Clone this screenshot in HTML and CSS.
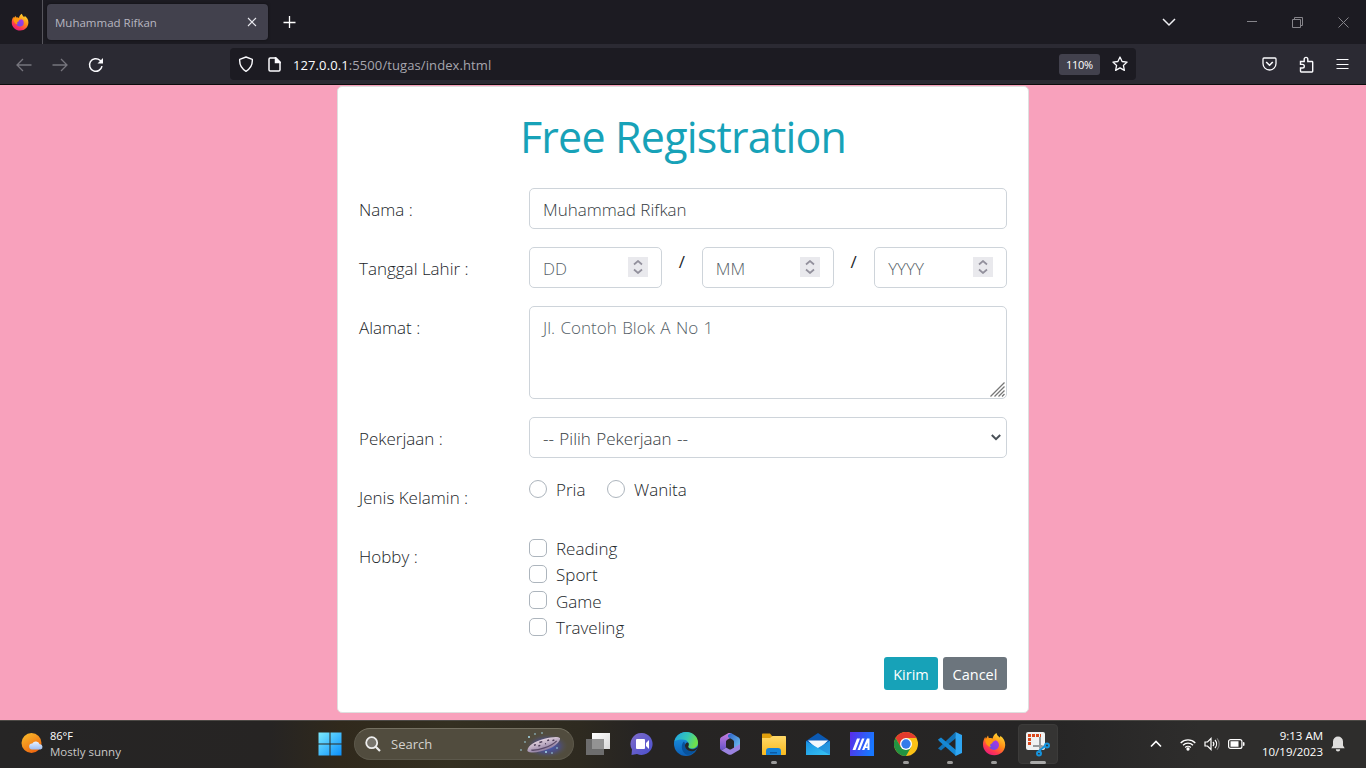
FILE: index.html
```html
<!DOCTYPE html>
<html lang="id">
<head>
<meta charset="utf-8">
<title>Muhammad Rifkan</title>
<link rel="stylesheet" href="styles.css">
</head>
<body>
<svg class="defs" width="0" height="0">
  <defs>
    <linearGradient id="fxA" x1=".8" y1="0" x2=".2" y2="1"><stop offset="0" stop-color="#ffe236"/><stop offset=".45" stop-color="#ff8a16"/><stop offset=".75" stop-color="#ff3750"/><stop offset="1" stop-color="#e31587"/></linearGradient>
    <linearGradient id="fxB" x1="1" y1="0" x2="0" y2="1"><stop offset="0" stop-color="#b833e1"/><stop offset="1" stop-color="#5a4ee8"/></linearGradient>
    <symbol id="firefox" viewBox="0 0 24 24">
      <path fill="url(#fxA)" d="M14.500 1c.4 2.300 2 3.200 3.100 4.600.6-.3.700-1.100.6-1.900C21.500 6 23.300 9 23.200 13 23 19 18.300 23.300 12.300 23.300 6 23.300 1 18.500 1 12.500c0-3 .8-5.500 2.300-7.500l.6 1.800L6 3.500l.8 2.800c1.500-.4 2.700-.2 3.800.3C11.200 4 12.300 2.300 14.500 1z"/>
      <circle cx="12" cy="13" r="5" fill="url(#fxB)"/>
      <path fill="#ff980e" d="M3.300 7.200C5.500 5.600 9 6 10.600 7.200l3.200.6c-.4 1.200-2.400 1.500-2.900 2-.4.500-.3 1.500-1.600 1.900-1.600.4-1.300 2.300-.3 3.200-3 .2-6-3.400-5.700-7.700z"/>
    </symbol>
    <linearGradient id="win" x2="1" y2="1"><stop stop-color="#7ceafe"/><stop offset="1" stop-color="#0a8ffb"/></linearGradient>
    <linearGradient id="sun" x2=".6" y2="1"><stop stop-color="#f9bf2c"/><stop offset="1" stop-color="#ee6710"/></linearGradient>
    <linearGradient id="cloud" x2="0" y2="1"><stop stop-color="#eaf3ff"/><stop offset="1" stop-color="#9dbdf0"/></linearGradient>
    <linearGradient id="tv" x2="1" y2="1"><stop stop-color="#fff"/><stop offset="1" stop-color="#d8d8d8"/></linearGradient>
    <linearGradient id="chat" x2="1" y2="1"><stop stop-color="#7e6bc9"/><stop offset="1" stop-color="#4a50cf"/></linearGradient>
    <linearGradient id="edA" x2="1" y2=".3"><stop stop-color="#1fa2e6"/><stop offset=".6" stop-color="#35c7b4"/><stop offset="1" stop-color="#6ee04c"/></linearGradient>
    <linearGradient id="edB" x2="0" y2="1"><stop stop-color="#1c9be8"/><stop offset="1" stop-color="#0c5fb6"/></linearGradient>
    <linearGradient id="ofA" x2="0" y2="1"><stop stop-color="#c77de0"/><stop offset="1" stop-color="#6552c8"/></linearGradient>
    <linearGradient id="ofB" x2="1" y2="1"><stop stop-color="#2b5fc4"/><stop offset="1" stop-color="#74c9f5"/></linearGradient>
    <linearGradient id="fold" x2="0" y2="1"><stop stop-color="#ffd969"/><stop offset="1" stop-color="#f8b91e"/></linearGradient>
    <linearGradient id="mail" x2="1" y2="1"><stop stop-color="#1790e2"/><stop offset="1" stop-color="#39c5f4"/></linearGradient>
    <linearGradient id="asus" x1="0" y1="0" x2="1" y2=".3"><stop stop-color="#5a2be8"/><stop offset="1" stop-color="#1877ff"/></linearGradient>
    <radialGradient id="glow"><stop stop-color="#3e62d8"/><stop offset=".6" stop-color="#4b4fa0" stop-opacity=".6"/><stop offset="1" stop-color="#555" stop-opacity="0"/></radialGradient>
    <linearGradient id="ship" x2="0" y2="1"><stop stop-color="#e0d0dc"/><stop offset="1" stop-color="#8d7ba0"/></linearGradient>
  </defs>
</svg>

<header class="tabbar">
  <div class="pinned"><svg width="18" height="18"><use href="#firefox"/></svg></div>
  <div class="tab">
    <span class="tab-title">Muhammad Rifkan</span>
    <svg width="10" height="10" viewBox="0 0 10 10" stroke="#e8e8ee" stroke-width="1.100"><path d="M1 1l8 8M9 1l-8 8"/></svg>
  </div>
  <svg class="new-tab" width="14" height="14" viewBox="0 0 14 14" stroke="#fff" stroke-width="1.300"><path d="M6.500 1v12M.5 7.500h12"/></svg>
  <div class="window-controls">
    <svg width="14" height="10" viewBox="0 0 14 10" fill="none" stroke="#f0f0f4" stroke-width="1.500"><path d="M1 2l6 6 6-6"/></svg>
    <svg class="minimize" width="10" height="10" viewBox="0 0 10 10" stroke="#85848a"><path d="M0 4.500h10"/></svg>
    <svg width="11" height="11" viewBox="0 0 11 11" fill="none" stroke="#85848a"><path d="M.5 2.500h8v8h-8zM2.500 2.500v-2h8v8h-2"/></svg>
    <svg width="11" height="11" viewBox="0 0 11 11" stroke="#85848a"><path d="M.5.5l10 10M10.500.5l-10 10"/></svg>
  </div>
</header>

<nav class="toolbar">
  <div class="nav-buttons">
    <svg width="16" height="14" viewBox="0 0 16 14" fill="none" stroke="#76757d" stroke-width="1.300"><path d="M15.500 7H1M7 1L1 7l6 6"/></svg>
    <svg width="16" height="14" viewBox="0 0 16 14" fill="none" stroke="#76757d" stroke-width="1.300"><path d="M.5 7H15M9 1l6 6-6 6"/></svg>
    <svg width="16" height="16" viewBox="0 0 16 16" fill="none" stroke="#fbfbfe" stroke-width="1.500"><path d="M14 9.200a6.300 6.300 0 1 1-2-5.900l1.500 1.500"/><path d="M15 1v5.500H9.500z" fill="#fbfbfe" stroke="none"/></svg>
  </div>
  <div class="urlbar">
    <svg width="16" height="16" viewBox="0 0 16 16" fill="none" stroke="#fbfbfe" stroke-width="1.400"><path d="M8 1l6.300 2.300c.4 5-1.600 9.200-6.300 12C3.300 12.500 1.300 8.300 1.700 3.300z" stroke-linejoin="round"/></svg>
    <svg class="page-icon" width="13" height="15" viewBox="0 0 13 15" fill="none" stroke="#fbfbfe" stroke-width="1.500"><path d="M8 1H2.200C1.500 1 1 1.500 1 2.200v10.500c0 .7.500 1.200 1.200 1.200h8.600c.7 0 1.200-.5 1.200-1.200V5z"/><path d="M7.500 1v4.500H12z" fill="#fbfbfe"/></svg>
    <span class="url"><b>127.0.0.1</b>:5500/tugas/index.html</span>
    <span class="zoom">110%</span>
    <svg width="16" height="16" viewBox="0 0 16 16" fill="none" stroke="#fbfbfe" stroke-width="1.300" stroke-linejoin="round"><path d="M8 1l2.100 4.500 5 .6-3.700 3.300 1 5L8 11.900l-4.400 2.500 1-5L.9 6.100l5-.6z"/></svg>
  </div>
  <div class="tool-buttons">
    <svg width="15" height="14" viewBox="0 0 15 14" fill="none" stroke="#fbfbfe" stroke-width="1.300"><path d="M2 1h11c.6 0 1 .4 1 1v4.500a6.500 6.500 0 0 1-13 0V2c0-.6.400-1 1-1z"/><path d="M4.200 5l3.300 3.200L10.800 5" stroke-width="1.600"/></svg>
    <svg width="15" height="17" viewBox="0 0 15 17" fill="none" stroke="#fbfbfe" stroke-width="1.400"><path d="M1.500 5.500H5.200V3.200a1.800 1.800 0 0 1 3.600 0V5.500H13c.4 0 .7.300.7.700v9.100c0 .4-.3.700-.7.700H2.200c-.4 0-.7-.3-.7-.7V12h2a1.800 1.800 0 0 0 0-3.600h-2z"/></svg>
    <svg width="13" height="11" viewBox="0 0 13 11" stroke="#fbfbfe" stroke-width="1.200"><path d="M.5.5h12M.5 5.500h12M.5 9.500h12"/></svg>
  </div>
</nav>

<main class="page">
  <form class="card">
    <h1 class="title"><span>Free Registration</span></h1>
    <div class="row"><label class="label">Nama :</label><div class="control">Muhammad Rifkan</div></div>
    <div class="row">
      <label class="label">Tanggal Lahir :</label>
      <div class="dates">
        <div class="control number">DD<i class="spin"><svg width="10" height="14" viewBox="0 0 10 14" fill="none" stroke="#92909c" stroke-width="1.700"><path d="M1 4.500l4-3.500 4 3.500M1 9.500L5 13l4-3.500"/></svg></i></div>
        <span class="slash">/</span>
        <div class="control number month">MM<i class="spin"><svg width="10" height="14" viewBox="0 0 10 14" fill="none" stroke="#92909c" stroke-width="1.700"><path d="M1 4.500l4-3.500 4 3.500M1 9.500L5 13l4-3.500"/></svg></i></div>
        <span class="slash">/</span>
        <div class="control number year">YYYY<i class="spin"><svg width="10" height="14" viewBox="0 0 10 14" fill="none" stroke="#92909c" stroke-width="1.700"><path d="M1 4.500l4-3.500 4 3.500M1 9.500L5 13l4-3.500"/></svg></i></div>
      </div>
    </div>
    <div class="row"><label class="label">Alamat :</label><div class="control area">Jl. Contoh Blok A No 1<svg class="grip" width="15" height="15" viewBox="0 0 15 15" stroke="#777" stroke-width="1.300"><path d="M.5 14.500l14-14M4.500 14.500l10-10M8.500 14.500l6-6M12 14.500l2.500-2.500"/></svg></div></div>
    <div class="row"><label class="label">Pekerjaan :</label><div class="control select"><span class="pick">-- Pilih Pekerjaan --</span><svg width="10" height="7" viewBox="0 0 10 7" fill="none" stroke="#495057" stroke-width="2"><path d="M.8 1L5 5.200 9.200 1"/></svg></div></div>
    <div class="row">
      <label class="label">Jenis Kelamin :</label>
      <div class="radios"><span class="option first"><i class="box round"></i>Pria</span><span class="option"><i class="box round"></i>Wanita</span></div>
    </div>
    <div class="row">
      <label class="label">Hobby :</label>
      <div class="checks"><span class="option"><i class="box"></i>Reading</span><span class="option"><i class="box"></i>Sport</span><span class="option"><i class="box"></i>Game</span><span class="option"><i class="box"></i>Traveling</span></div>
    </div>
    <div class="actions"><button type="button" class="btn send">Kirim</button><button type="button" class="btn cancel">Cancel</button></div>
  </form>
</main>

<footer class="taskbar">
  <div class="weather">
    <svg width="23" height="21" viewBox="0 0 23 21"><circle cx="10.500" cy="10" r="10" fill="url(#sun)"/><path fill="url(#cloud)" d="M11 16.500a3 3 0 0 1 .3-6 4 4 0 0 1 7.300.7 2.700 2.700 0 0 1 .9 5.300z"/></svg>
    <div><div class="temp">86°F</div><div class="sky">Mostly sunny</div></div>
  </div>
  <div class="apps">
    <svg class="start" width="24" height="24" viewBox="0 0 24 24" fill="url(#win)"><path d="M.5.5h11v11H.5zM12.500.5h11v11h-11zM.5 12.500h11v11H.5zM12.500 12.500h11v11h-11z"/></svg>
    <div class="search">
      <svg width="16" height="16" viewBox="0 0 16 16" fill="none" stroke="#eee" stroke-width="1.800"><circle cx="6.700" cy="6.700" r="5.500" fill="#77746c"/><path d="M10.700 10.700l4.300 4.300" stroke-width="2.200"/></svg>
      <span class="search-text">Search</span>
      <svg class="ship" width="50" height="28" viewBox="0 0 50 28"><ellipse cx="29" cy="16" rx="21" ry="12" fill="url(#glow)"/><g transform="rotate(-17 25 14)"><path fill="url(#ship)" d="M8 16C10 11 18 9 28 9.500c7 .3 14 1.500 15 4-1 3.500-7 6.500-15 7-9 .5-18-1-20-4.500z"/><path d="M12 16.500c6 2.500 20 2.500 27-1.500" fill="none" stroke="#5b4a69" stroke-width="1.300"/><path d="M16 12.500h2M22 11.500h3M30 12h2M20 14.500h2M35 13.500h2M27 14.500h1" stroke="#4a3b57" stroke-width="1.500"/></g><g fill="#a7ddec"><circle cx="11" cy="7" r="1"/><circle cx="17" cy="4" r=".8"/><circle cx="24" cy="3" r=".8"/><circle cx="7" cy="12" r=".8"/><circle cx="3" cy="20" r=".8"/><circle cx="28" cy="22" r="1"/><circle cx="34" cy="23" r=".8"/><circle cx="39" cy="18" r=".8"/></g></svg>
    </div>
    <div class="app"><svg width="24" height="22" viewBox="0 0 24 22"><path d="M6 0h18v16H6z" fill="url(#tv)"/><path d="M0 6h18v16H0z" fill="#6d6d6d"/><path d="M6 6h12v10H6z" fill="#939393"/></svg></div>
    <div class="app chat"><svg width="24" height="24" viewBox="0 0 24 24"><path fill="url(#chat)" d="M12 1a11 11 0 1 1-5 21l-5.500 1L2 17.500A11 11 0 0 1 12 1z"/><rect x="6" y="7" width="9" height="10" rx="1" fill="#fff"/><path fill="#fff" d="M16 11l3-3v9l-3-3z"/></svg></div>
    <div class="app"><svg width="24" height="24" viewBox="0 0 24 24"><circle cx="12" cy="12" r="12" fill="url(#edB)"/><path fill="url(#edA)" d="M.3 9.500C2 3.500 6.700 0 12 0c7 0 12 5 12 10.500 0 4-3 6-6.500 6-3 0-4-1.300-3.200-2.500C16 11 13 7.500 8.500 7.500 5 7.500 2 8 .3 9.500z"/><path fill="#08529c" d="M10 9.500c-3 2.500-3.500 9 2 13 4 1 8-1 10-5-4 2.500-11 1-11-4.500 0-1.500-.3-2.500-1-3.500z"/><path fill="#272625" d="M14 10.500c1.500 1.500.6 3 .2 4 0 2 3 3.200 6 2.500 1.800-.5 3-1.600 3.600-3-.2 1.500-.8 3-1.800 4-5 3-11 0-11-4.500 0-2 1.500-3.500 3-3z"/></svg></div>
    <div class="app"><svg width="20" height="22" viewBox="0 0 20 22"><path fill="url(#ofA)" d="M11 0H8.500L1.500 4C.5 4.600 0 5.500 0 6.500V15c0 1.200.7 2 1.500 2.400L6 14.500V9c0-1 .5-1.800 1.300-2.300L12 4z"/><path fill="url(#ofB)" d="M11 0l7.300 4.200C19.500 5 20 5.700 20 7v8c0 .8-.5 1.700-1.500 2.300L14 15V9c0-1-.5-1.800-1.300-2.300L8 4V2z"/><path fill="#9b83e0" d="M1.500 17.500L6 14.500l3 1.800c.7.400 1.500.4 2.200 0L20 11v4c0 1-.5 1.800-1.300 2.300L12 21.200c-1.300.8-2.700.8-4 0z"/><path fill="#262524" d="M6.500 8.700L10 6.500l3.500 2.200v4.600L10 15.500l-3.500-2.200z"/></svg></div>
    <div class="app running"><svg width="24" height="22" viewBox="0 0 24 22"><path fill="#e09f0c" d="M0 1.500C0 .7.500.5 1 .5h7l2.500 3-2 3H0z"/><path fill="url(#fold)" d="M0 5h8l2.500-2H23c.6 0 1 .4 1 1v17c0 .6-.4 1-1 1H1c-.6 0-1-.4-1-1z"/><path fill="#1482d8" d="M4 22v-4a3 3 0 0 1 3-3h9a3 3 0 0 1 3 3v4z"/><path fill="#0c59a4" d="M8 19h7v1.500H8z"/></svg></div>
    <div class="app"><svg width="24" height="22" viewBox="0 0 24 22"><path fill="#0b59b2" d="M0 8L12 0l12 8v6H0z"/><path fill="#f3f8fd" d="M2 7.500h20L12 17z"/><path fill="url(#mail)" d="M0 8l12 7 12-7v14H0z"/><path fill="#1c78cf" d="M24 8v14L12 15z" opacity=".5"/></svg></div>
    <div class="app"><svg width="24" height="24" viewBox="0 0 24 24"><path fill="url(#asus)" d="M0 0h24v24H0z"/><path fill="#fff" d="M2.500 18L7 6.500h3L5.500 18zM7.500 18L12 6.500h2.500L10 18zM12 18l5-11.500h2.500V18h-2v-2h-2.300l-.8 2zm4-3.500h1.500V10.500z"/></svg></div>
    <div class="app running"><svg width="24" height="24" viewBox="0 0 24 24"><circle cx="12" cy="12" r="12" fill="#fbc116"/><path fill="#e33b2e" d="M1.600 6A12 12 0 0 1 22.400 6H12L6.800 15z"/><path fill="#229342" d="M1.600 6A12 12 0 0 0 12 24l5.200-9L12 17.500 6.800 15z"/><circle cx="12" cy="12" r="6" fill="#fff"/><circle cx="12" cy="12" r="4.700" fill="#327bea"/></svg></div>
    <div class="app running"><svg width="24" height="24" viewBox="0 0 24 24"><path fill="#1173b8" d="M1 15.500L17.500 0 18 6 3 18.500 0 16.500z"/><path fill="#1688d4" d="M0 7.500L3 5.500 18 18v6L1 9z"/><path fill="#2fa6f2" d="M17.500 0L24 3v18l-6.500 3z"/></svg></div>
    <div class="app running"><svg width="24" height="24"><use href="#firefox"/></svg></div>
    <div class="app running active"><svg width="25" height="25" viewBox="0 0 25 25"><rect width="19" height="18" rx="2" fill="#eff1f2"/><path d="M3.500 13V3.500H15" fill="none" stroke="#d9481c" stroke-width="3" stroke-dasharray="3 1"/><path d="M14 5v10l6-1M7 14h8l-2 7" fill="none" stroke="#96999b" stroke-width="2"/><circle cx="21" cy="13.500" r="2" fill="none" stroke="#1593dd" stroke-width="2"/><circle cx="13" cy="21.500" r="2" fill="none" stroke="#1593dd" stroke-width="2"/><path d="M13 19l6-5" stroke="#1593dd" stroke-width="2"/></svg></div>
  </div>
  <div class="tray">
    <svg width="12" height="8" viewBox="0 0 12 8" fill="none" stroke="#fff" stroke-width="1.600"><path d="M1 6.500l5-5 5 5"/></svg>
    <svg class="wifi" width="16" height="13" viewBox="0 0 16 13" fill="none" stroke="#fff" stroke-width="1.300"><path d="M.7 5a10.300 10.300 0 0 1 14.600 0M3 7.300a7 7 0 0 1 10 0M5.200 9.500a4 4 0 0 1 5.600 0"/><circle cx="8" cy="11" r="1" fill="#fff"/></svg>
    <svg class="sound" width="16" height="14" viewBox="0 0 16 14" fill="none" stroke="#fff" stroke-width="1.200"><path d="M1 5h2.500L7 1.500v11L3.500 9H1zM9 5a3 3 0 0 1 0 4M11 3a6 6 0 0 1 0 8"/><path d="M13 1.300a8.500 8.500 0 0 1 0 11.400" stroke="#777"/></svg>
    <svg class="battery" width="17" height="10" viewBox="0 0 17 10"><rect x=".6" y=".6" width="13.300" height="8.800" rx="2" fill="none" stroke="#fff" stroke-width="1.200"/><path fill="#fff" d="M2.500 2.300h8v5.400h-8zM15 3l1.500.5v3L15 7z"/></svg>
    <div class="clock"><div class="time">9:13 AM</div><div class="date">10/19/2023</div></div>
    <svg class="bell" width="14" height="16" viewBox="0 0 14 16" fill="#dedddc"><path d="M7 .5a5 5 0 0 1 5 5V9.500l1.700 2.800H.3L2 9.500V5.500a5 5 0 0 1 5-5zM4.800 13.300h4.400a2.200 2.200 0 0 1-4.400 0z"/></svg>
  </div>
</footer>
</body>
</html>
```
FILE: styles.css
```css
* { box-sizing: border-box; }
html, body { margin: 0; height: 100%; overflow: hidden; }
body {
  display: flex; flex-direction: column;
  font-family: "Open Sans", "Noto Sans", sans-serif;
  background: #f8a1bc;
}
svg { display: block; flex: none; }
.defs { position: absolute; }

.tabbar { display: flex; align-items: center; height: 44px; flex: none; background: #1c1b22; }
.pinned { width: 43px; height: 44px; padding: 13px 0 0 11px; border-right: 1px solid #56555c; }
.tab {
  display: flex; align-items: center; justify-content: space-between;
  width: 221px; height: 36px; margin-left: 4px; padding: 0 11px 0 8px;
  border-radius: 4px; background: #42414d; box-shadow: 0 0 3px rgba(0,0,0,.5);
}
.tab-title { font-size: 11.500px; color: #b7b6c0; }
.new-tab { margin-left: 15px; }
.window-controls { display: flex; align-items: center; margin-left: auto; padding-right: 17px; gap: 35px; }
.minimize { margin-left: 36px; }

.toolbar { display: flex; align-items: center; height: 41px; flex: none; background: #2b2a33; border-bottom: 1px solid #0c0c0d; }
.nav-buttons { display: flex; align-items: center; gap: 20px; width: 230px; padding: 1px 0 0 16px; }
.urlbar { display: flex; align-items: center; width: 906px; height: 32px; padding: 0 8px; border-radius: 4px; background: #1c1b22; }
.page-icon { margin-left: 14px; }
.url { margin: 1px 0 0 12px; font-size: 13px; color: #a7a6ae; letter-spacing: .1px; }
.url b { font-weight: 400; color: #fbfbfe; }
.zoom { margin: 0 12px 0 auto; width: 41px; height: 21px; border-radius: 3px; background: #42414d; color: #fff; font-size: 11px; line-height: 21px; text-align: center; letter-spacing: -.3px; }
.tool-buttons { display: flex; align-items: center; gap: 22px; margin-left: auto; padding-right: 17px; }

.page { flex: 1; display: flex; justify-content: center; align-items: flex-start; padding-top: 1px; color: #212529; font-size: 17px; font-weight: 300; }
.card { width: 692px; height: 627px; padding: 21px 21px 0; background: #fff; border: 1px solid #dfdfdf; border-radius: 5px; }
.title { margin: 0 0 27px; height: 53px; line-height: 58px; font-size: 43px; font-weight: 400; letter-spacing: -.8px; text-align: center; color: #17a2b8; white-space: nowrap; }
.row { display: grid; grid-template-columns: 170px 478px; min-height: 41px; margin-bottom: 18px; }
.label { padding-top: 9px; line-height: 26px; }
.control { height: 41px; padding: 8px 13px; line-height: 26px; border: 1px solid #ced4da; border-radius: 5px; color: #343b42; }
.dates { display: flex; }
.number { display: flex; justify-content: space-between; width: 133px; color: #565f68; }
.month { width: 132px; }
.year { margin-left: .5px; }
.spin { display: flex; align-items: center; justify-content: center; width: 20px; height: 20px; margin-top: 1px; background: #e9e9ed; }
.slash { width: 40px; line-height: 29px; text-align: center; font-weight: 400; }
.area { display: flex; justify-content: space-between; height: 93px; padding-right: 1px; padding-bottom: 1px; color: #565f68; word-spacing: 1px; }
.grip { align-self: flex-end; }
.select { display: flex; justify-content: space-between; align-items: center; padding-right: 5px; }
.pick { word-spacing: 1px; position: relative; top: 1px; }
.radios { display: flex; height: 26px; }
.option { display: flex; align-items: center; height: 26.300px; line-height: 26px; }
.first { width: 78px; }
.box { width: 18px; height: 18px; margin: -3px 9px 0 0; border: 1px solid #adb5bd; border-radius: 5px; }
.round { border-radius: 50%; }
.checks { height: 104px; }
.radios .option, .checks .option { position: relative; top: 1px; }
.actions { display: flex; justify-content: flex-end; gap: 5px; }
.btn { height: 33px; padding: 2px 0 0; border: 0; border-radius: 3px; color: #fff; font-family: inherit; font-size: 14.500px; }
.send { width: 54px; background: #17a2b8; }
.cancel { width: 64px; background: #6c757d; }

.taskbar {
  display: flex; height: 48px; flex: none; border-top: 1px solid #4c4945;
  background: linear-gradient(90deg, #262525 0, #262423 270px, #30291c 340px, #343021 450px, #2e2a20 580px, #262423 640px, #262525 1050px, #2e2d2c 1200px);
  color: #fff; font-size: 11.500px;
}
.weather { display: flex; gap: 6px; width: 318px; padding: 12px 0 0 21px; }
.weather div { line-height: 16px; }
.temp { margin-top: -5px; font-size: 11px; }
.sky { color: #c9c8c7; }
.apps { display: flex; align-items: center; padding-bottom: 1px; }
.search { display: flex; align-items: center; width: 220px; height: 32px; margin: 0 2px 0 12px; padding: 0 5px 0 10px; border-radius: 16px; background: #514c3e; border: 1px solid #5c584b; border-top-color: #747061; }
.search-text { margin-left: 10px; font-size: 13px; color: #d5d3ce; }
.ship { margin-left: auto; }
.app { display: flex; flex-direction: column; align-items: center; justify-content: center; width: 40px; height: 40px; margin: 0 2px; position: relative; border-radius: 4px; }
.running::after { content: ""; position: absolute; bottom: 0; width: 6px; height: 3px; border-radius: 2px; background: #9c9b9a; }
.active { background: #353433; border: 1px solid #3c3b3a; }
.active::after { width: 16px; bottom: -1px; background: #aaa; }
.tray { display: flex; align-items: center; margin-left: auto; padding: 0 21px 1px 0; }
.wifi { margin-left: 18px; }
.sound { margin-left: 8px; }
.battery { margin-left: 8px; }
.clock { width: 78px; text-align: right; line-height: 16px; }
.bell { margin-left: 8px; }
```
